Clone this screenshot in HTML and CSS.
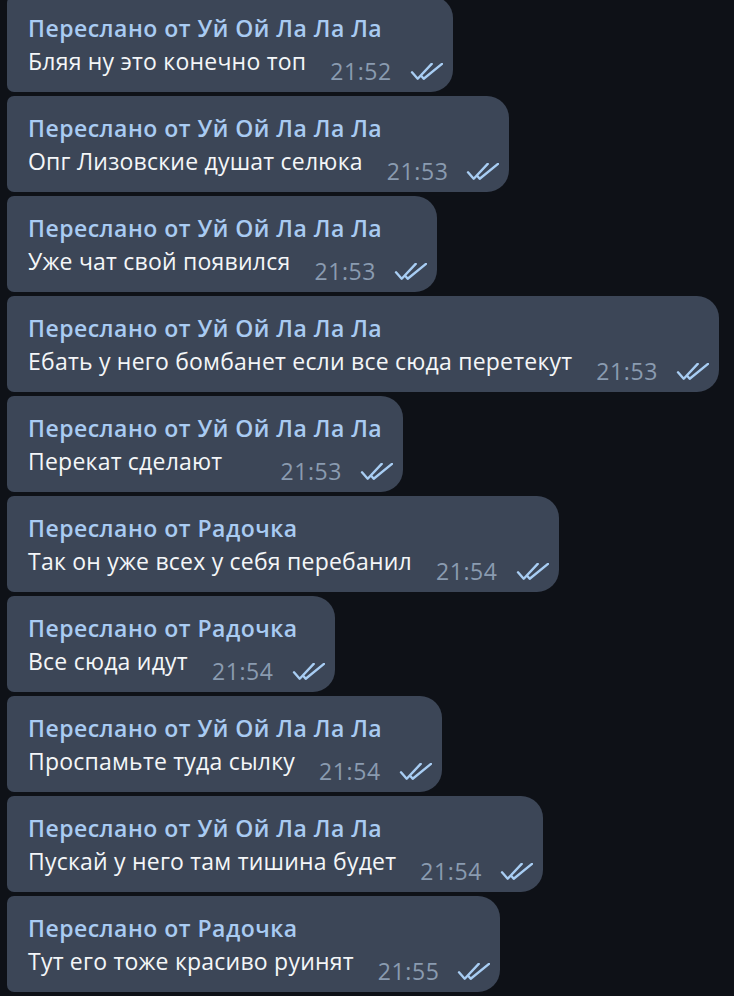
FILE: index.html
```html
<!DOCTYPE html>
<html lang="ru">
<head>
<meta charset="utf-8">
<title>Messages</title>
<link rel="stylesheet" href="styles.css">
</head>
<body>
<div class="list">
  <div class="bubble"><div class="name">Переслано от Уй Ой Ла Ла Ла</div><div class="row"><span class="text">Бляя ну это конечно топ</span><span class="meta"><span class="time">21:52</span><svg class="checks" viewBox="0 0 33 17"><path d="M2 9.3 L7.7 15.7 L21.7 0.9"/><path d="M11.6 13.2 L13.7 15.7 L32 0.9"/></svg></span></div></div>
  <div class="bubble"><div class="name">Переслано от Уй Ой Ла Ла Ла</div><div class="row"><span class="text">Опг Лизовские душат селюка</span><span class="meta"><span class="time">21:53</span><svg class="checks" viewBox="0 0 33 17"><path d="M2 9.3 L7.7 15.7 L21.7 0.9"/><path d="M11.6 13.2 L13.7 15.7 L32 0.9"/></svg></span></div></div>
  <div class="bubble"><div class="name">Переслано от Уй Ой Ла Ла Ла</div><div class="row"><span class="text">Уже чат свой появился</span><span class="meta"><span class="time">21:53</span><svg class="checks" viewBox="0 0 33 17"><path d="M2 9.3 L7.7 15.7 L21.7 0.9"/><path d="M11.6 13.2 L13.7 15.7 L32 0.9"/></svg></span></div></div>
  <div class="bubble"><div class="name">Переслано от Уй Ой Ла Ла Ла</div><div class="row"><span class="text">Ебать у него бомбанет если все сюда перетекут</span><span class="meta"><span class="time">21:53</span><svg class="checks" viewBox="0 0 33 17"><path d="M2 9.3 L7.7 15.7 L21.7 0.9"/><path d="M11.6 13.2 L13.7 15.7 L32 0.9"/></svg></span></div></div>
  <div class="bubble"><div class="name">Переслано от Уй Ой Ла Ла Ла</div><div class="row"><span class="text">Перекат сделают</span><span class="meta"><span class="time">21:53</span><svg class="checks" viewBox="0 0 33 17"><path d="M2 9.3 L7.7 15.7 L21.7 0.9"/><path d="M11.6 13.2 L13.7 15.7 L32 0.9"/></svg></span></div></div>
  <div class="bubble"><div class="name">Переслано от Радочка</div><div class="row"><span class="text">Так он уже всех у себя перебанил</span><span class="meta"><span class="time">21:54</span><svg class="checks" viewBox="0 0 33 17"><path d="M2 9.3 L7.7 15.7 L21.7 0.9"/><path d="M11.6 13.2 L13.7 15.7 L32 0.9"/></svg></span></div></div>
  <div class="bubble"><div class="name">Переслано от Радочка</div><div class="row"><span class="text">Все сюда идут</span><span class="meta"><span class="time">21:54</span><svg class="checks" viewBox="0 0 33 17"><path d="M2 9.3 L7.7 15.7 L21.7 0.9"/><path d="M11.6 13.2 L13.7 15.7 L32 0.9"/></svg></span></div></div>
  <div class="bubble"><div class="name">Переслано от Уй Ой Ла Ла Ла</div><div class="row"><span class="text">Проспамьте туда сылку</span><span class="meta"><span class="time">21:54</span><svg class="checks" viewBox="0 0 33 17"><path d="M2 9.3 L7.7 15.7 L21.7 0.9"/><path d="M11.6 13.2 L13.7 15.7 L32 0.9"/></svg></span></div></div>
  <div class="bubble"><div class="name">Переслано от Уй Ой Ла Ла Ла</div><div class="row"><span class="text">Пускай у него там тишина будет</span><span class="meta"><span class="time">21:54</span><svg class="checks" viewBox="0 0 33 17"><path d="M2 9.3 L7.7 15.7 L21.7 0.9"/><path d="M11.6 13.2 L13.7 15.7 L32 0.9"/></svg></span></div></div>
  <div class="bubble"><div class="name">Переслано от Радочка</div><div class="row"><span class="text">Тут его тоже красиво руинят</span><span class="meta"><span class="time">21:55</span><svg class="checks" viewBox="0 0 33 17"><path d="M2 9.3 L7.7 15.7 L21.7 0.9"/><path d="M11.6 13.2 L13.7 15.7 L32 0.9"/></svg></span></div></div>
</div>
</body>
</html>
```

FILE: styles.css
```css
html, body {
  margin: 0;
  padding: 0;
  background: #0e1117;
  height: 100%;
  overflow: hidden;
}

body {
  font-family: "Open Sans", "Noto Sans", sans-serif;
  font-size: 23px;
}

.list {
  display: flex;
  flex-direction: column;
  align-items: flex-start;
  gap: 4px;
  padding-left: 7px;
  margin-top: -4px;
}

.bubble {
  background: #3c4657;
  border-radius: 7px 22px 22px 7px;
  padding: 16px 10px 6px 21px;
  white-space: nowrap;
}

.name {
  font-weight: 600;
  color: #a9cbf2;
  line-height: 33px;
  letter-spacing: 0.48px;
  padding-right: 11px;
}

.row {
  display: flex;
  align-items: flex-end;
}

.text {
  color: #f4f6f8;
  line-height: 33px;
  padding-bottom: 8px;
  margin-right: 24px;
  letter-spacing: 0.22px;
}

.meta {
  display: flex;
  align-items: center;
  margin-left: auto;
  margin-bottom: -2px;
  line-height: 33px;
}

.time {
  color: #8a9bb0;
  letter-spacing: 0.6px;
}

.checks {
  width: 33px;
  height: 17px;
  margin-left: 18px;
  fill: none;
  stroke: #a8cdf3;
  stroke-width: 2.4;
  stroke-linecap: round;
  stroke-linejoin: round;
}
```
